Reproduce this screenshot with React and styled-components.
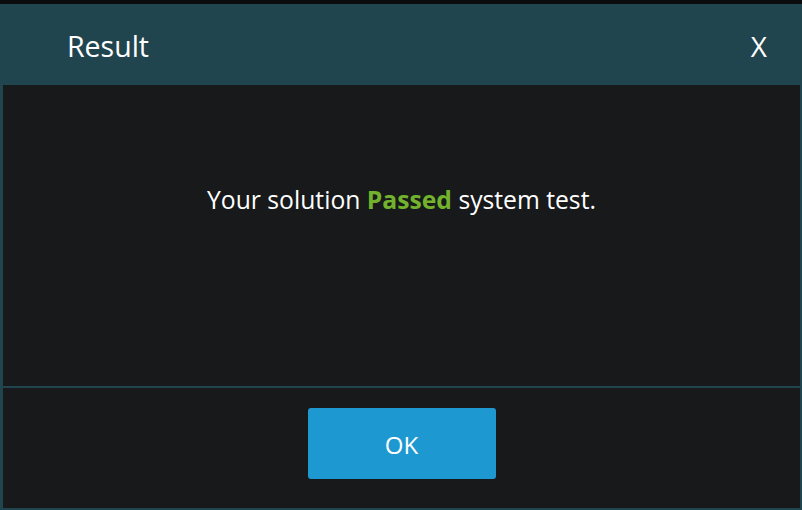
import React from "react";
import styled, { createGlobalStyle } from "styled-components";

const GlobalStyle = createGlobalStyle`
  html, body {
    margin: 0;
    padding: 0;
    background: #0b0c0d;
    font-family: "Open Sans", "Noto Sans", sans-serif;
  }
`;

const Page = styled.div`
  width: 802px;
  height: 510px;
  padding-top: 4px;
  box-sizing: border-box;
  background: #0b0c0d;
`;

const Modal = styled.div`
  height: 506px;
  box-sizing: border-box;
  border: 2px solid #21454f;
  border-left-width: 3px;
  border-top: none;
  background: #17191b;
  display: flex;
  flex-direction: column;
`;

const Header = styled.div`
  height: 81px;
  flex-shrink: 0;
  box-sizing: border-box;
  background: #21454f;
  display: flex;
  align-items: center;
  justify-content: space-between;
  padding: 3px 33px 0 64px;
  color: #fff;
`;

const Title = styled.h2`
  margin: 0;
  font-size: 28.5px;
  font-weight: 400;
`;

const Close = styled.span`
  font-size: 28px;
  font-weight: 400;
  cursor: pointer;
`;

const Body = styled.div`
  height: 303px;
  flex-shrink: 0;
  box-sizing: border-box;
  padding-top: 98px;
  text-align: center;
  color: #fff;
  font-size: 24.7px;
  border-bottom: 2px solid #21454f;
`;

const Status = styled.strong`
  color: ${(p) => p.color};
  font-weight: 700;
`;

const Footer = styled.div`
  flex: 1;
  display: flex;
  justify-content: center;
  padding-top: 20px;
`;

const Button = styled.button`
  width: 188px;
  height: 71px;
  padding-top: 3px;
  border: none;
  border-radius: 3px;
  background: #1e98d0;
  color: #fff;
  font-family: inherit;
  font-size: 24px;
  cursor: pointer;
`;

export default function App() {
  return (
    <>
      <GlobalStyle />
      <Page>
        <Modal>
          <Header>
            <Title>Result</Title>
            <Close>X</Close>
          </Header>
          <Body>
            Your solution <Status color="#72b22c">Passed</Status> system test.
          </Body>
          <Footer>
            <Button>OK</Button>
          </Footer>
        </Modal>
      </Page>
    </>
  );
}
